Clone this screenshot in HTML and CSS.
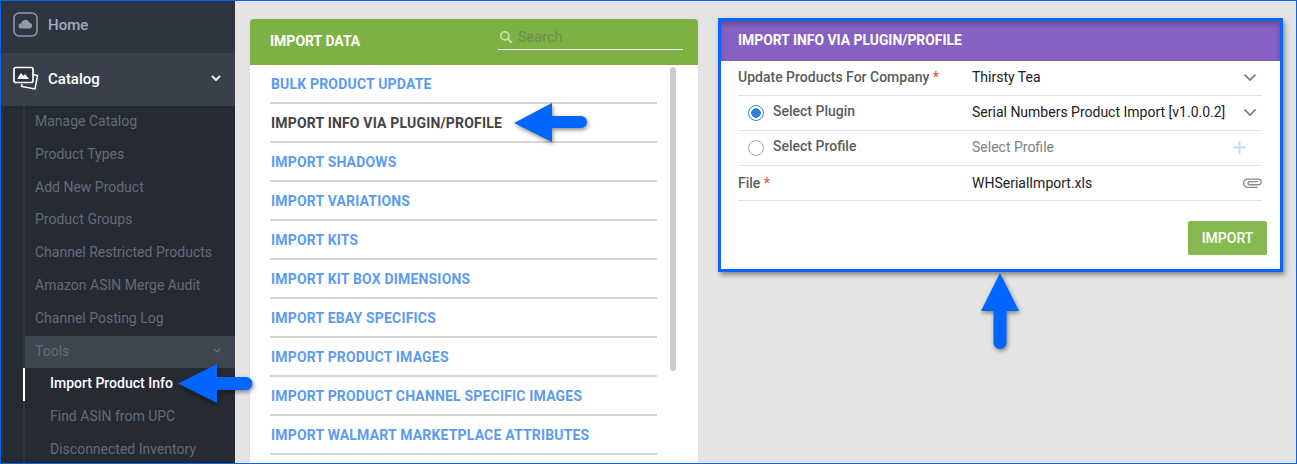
FILE: index.html
```html
<!DOCTYPE html>
<html lang="en">
<head>
<meta charset="utf-8">
<title>Import Info via Plugin/Profile</title>
<link rel="stylesheet" href="styles.css">
</head>
<body>
<div class="frame">
  <nav class="sidebar">
    <a class="nav-main">
      <svg class="nav-icon" width="26" height="26" viewBox="0 0 26 26"><rect x="1" y="1" width="23" height="23" rx="5" fill="none" stroke="#8f99ab" stroke-width="1.6"/><path d="M8 16.5a2.6 2.6 0 0 1 .2-5.2 4.4 4.4 0 0 1 8.4-.6 3 3 0 0 1 .6 5.8z" fill="#8f99ab"/></svg>
      <span>Home</span>
    </a>
    <a class="nav-main nav-open">
      <svg class="nav-icon" width="26" height="26" viewBox="0 0 26 26"><path d="M20 8.5l4.5 1-2.5 13.5-13.500-2.500.6-2.500" fill="none" stroke="#fff" stroke-width="1.500"/><rect x="1" y="1.500" width="19" height="15" rx="2" fill="#2f3540" stroke="#fff" stroke-width="1.700"/><path d="M4 13l4-6 2.500 3 1.500-2 4 5z" fill="#fff"/></svg>
      <span>Catalog</span>
      <svg class="nav-chev" width="10" height="7" viewBox="0 0 10 7"><path d="M1 1l4 4 4-4" fill="none" stroke="#fff" stroke-width="1.800"/></svg>
    </a>
    <div class="sub">
      <a class="sub-item">Manage Catalog</a>
      <a class="sub-item">Product Types</a>
      <a class="sub-item">Add New Product</a>
      <a class="sub-item">Product Groups</a>
      <a class="sub-item">Channel Restricted Products</a>
      <a class="sub-item">Amazon ASIN Merge Audit</a>
      <a class="sub-item">Channel Posting Log</a>
      <a class="sub-item sub-tools"><span>Tools</span><svg width="8" height="5" viewBox="0 0 8 5"><path d="M.7.7L4 4 7.300.7" fill="none" stroke="#6d7482" stroke-width="1.100"/></svg></a>
      <a class="sub-item sub-deep sub-active">Import Product Info</a>
      <a class="sub-item sub-deep">Find ASIN from UPC</a>
      <a class="sub-item sub-deep">Disconnected Inventory</a>
    </div>
  </nav>

  <main class="content">
    <section class="list-panel">
      <header class="list-head">
        <h2 class="list-title">IMPORT DATA</h2>
        <div class="search">
          <svg width="14" height="14" viewBox="0 0 14 14"><circle cx="5.800" cy="5.800" r="4" fill="none" stroke="#c4dca8" stroke-width="1.800"/><path d="M8.800 8.800l4 4" stroke="#c4dca8" stroke-width="2"/></svg>
          <span class="search-ph">Search</span>
        </div>
      </header>
      <div class="list-body">
        <ul class="list">
          <li class="list-item">BULK PRODUCT UPDATE</li>
          <li class="list-item list-current">IMPORT INFO VIA PLUGIN/PROFILE</li>
          <li class="list-item">IMPORT SHADOWS</li>
          <li class="list-item">IMPORT VARIATIONS</li>
          <li class="list-item">IMPORT KITS</li>
          <li class="list-item">IMPORT KIT BOX DIMENSIONS</li>
          <li class="list-item">IMPORT EBAY SPECIFICS</li>
          <li class="list-item">IMPORT PRODUCT IMAGES</li>
          <li class="list-item">IMPORT PRODUCT CHANNEL SPECIFIC IMAGES</li>
          <li class="list-item">IMPORT WALMART MARKETPLACE ATTRIBUTES</li>
        </ul>
        <div class="scrollbar"></div>
      </div>
    </section>

    <section class="form-panel">
      <header class="form-head">IMPORT INFO VIA PLUGIN/PROFILE</header>
      <div class="form-body">
        <div class="form-row form-row-first">
          <div class="form-label">Update Products For Company <span class="req">*</span></div>
          <div class="form-value">Thirsty Tea</div>
          <svg class="form-icon" width="14" height="9" viewBox="0 0 14 9"><path d="M1.500 1.500L7 7l5.500-5.500" fill="none" stroke="#757575" stroke-width="1.700"/></svg>
        </div>
        <div class="form-row form-row-mid">
          <div class="form-label form-radio"><span class="radio radio-on"></span>Select Plugin</div>
          <div class="form-value">Serial Numbers Product Import [v1.0.0.2]</div>
          <svg class="form-icon" width="14" height="9" viewBox="0 0 14 9"><path d="M1.500 1.500L7 7l5.500-5.500" fill="none" stroke="#757575" stroke-width="1.700"/></svg>
        </div>
        <div class="form-row form-row-mid">
          <div class="form-label form-radio"><span class="radio"></span>Select Profile</div>
          <div class="form-value form-ph">Select Profile</div>
          <svg class="form-icon form-plus" width="13" height="13" viewBox="0 0 13 13"><path d="M6.500 0v13M0 6.500h13" stroke="#c5d9f8" stroke-width="1.800"/></svg>
        </div>
        <div class="form-row">
          <div class="form-label">File <span class="req">*</span></div>
          <div class="form-value">WHSerialImport.xls</div>
          <svg class="form-icon form-clip" width="19" height="10" viewBox="1 6.500 22 11.500"><path transform="rotate(90 12 12)" d="M16.500 6v11.500c0 2.210-1.790 4-4 4s-4-1.790-4-4V5c0-1.380 1.120-2.500 2.500-2.500s2.500 1.120 2.500 2.500v10.500c0 .55-.45 1-1 1s-1-.45-1-1V6H10v9.500c0 1.380 1.120 2.500 2.500 2.500s2.500-1.120 2.500-2.500V5c0-2.210-1.790-4-4-4S7 2.790 7 5v12.500c0 3.040 2.460 5.500 5.500 5.500s5.500-2.460 5.500-5.500V6h-1.500z" fill="#8a8a8a"/></svg>
        </div>
        <div class="form-actions"><button class="btn-import" type="button">IMPORT</button></div>
      </div>
    </section>
  </main>

  <svg class="arrow arrow-side" width="80" height="46" viewBox="0 0 80 46"><path d="M2 22.500L41 3v13h29a6.500 6.500 0 0 1 0 13H41v13z" fill="#0066ff"/></svg>
  <svg class="arrow arrow-list" width="80" height="46" viewBox="0 0 80 46"><path d="M2 23L40 3v13h29a6 6 0 0 1 0 12H40v14z" fill="#0066ff"/></svg>
  <svg class="arrow arrow-up" width="44" height="84" viewBox="0 0 44 84"><path d="M22 2l19 38H28.500v31.500a6.500 6.500 0 0 1-13 0V40H3z" fill="#0066ff"/></svg>
</div>
</body>
</html>
```

FILE: styles.css
```css
* { box-sizing: border-box; }
html, body { margin: 0; padding: 0; }
body { width: 1297px; height: 464px; overflow: hidden; font-family: Roboto, "Liberation Sans", sans-serif; }
ul { margin: 0; padding: 0; list-style: none; }
h2 { margin: 0; }

.frame {
  position: relative;
  display: flex;
  width: 1297px;
  height: 464px;
  overflow: hidden;
  background: #e4e4e4;
  border: 1px solid #0a64e6;
}

.sidebar { flex: 0 0 234px; background: #252a33; overflow: hidden; }
.nav-main {
  display: flex;
  align-items: center;
  height: 52px;
  padding: 0 0 4px 12px;
  background: #2f3540;
  color: #a3abbb;
  font-size: 15px;
  font-weight: 500;
}
.nav-open { height: 53px; padding: 0 14px 2px 12px; background: #3a404b; color: #fff; }
.nav-icon { flex: none; margin-right: 9px; }
.nav-chev { margin-left: auto; }

.sub { margin-left: 22px; border-left: 2px solid #303641; }
.sub-item {
  display: flex;
  align-items: center;
  height: 32.800px;
  padding: 0 0 2.600px 10px;
  color: #646b78;
  font-size: 14px;
}
.sub-tools { justify-content: space-between; padding-right: 14px; background: #3f4551; }
.sub-deep { padding-left: 25px; }
.sub-active { color: #fff; font-weight: 500; box-shadow: -2px 0 0 #fff; }

.content { flex: 1; display: flex; align-items: flex-start; gap: 20px; padding: 18px 0 0 15px; }

.list-panel { width: 448px; height: 460px; background: #fff; border-radius: 4px 4px 0 0; box-shadow: 0 0 2px #d4d4d4; }
.list-head {
  display: flex;
  justify-content: space-between;
  height: 46px;
  padding: 0 15px 0 20px;
  background: #7cb244;
  border-radius: 4px 4px 0 0;
}
.list-title { align-self: center; padding-bottom: 3px; color: #fff; font-size: 14px; font-weight: 700; }
.search {
  display: flex;
  align-items: center;
  gap: 5px;
  width: 185px;
  height: 31px;
  padding: 6px 0 0 1px;
  border-bottom: 1px solid #fff;
}
.search-ph { color: #6f8a57; font-size: 14.500px; }

.list-body { display: flex; gap: 13px; padding: 0 0 0 20px; }
.list { width: 387px; flex: none; }
.list-item {
  height: 39px;
  padding-top: 11px;
  padding-left: 1px;
  border-bottom: 2px solid #d5d5d5;
  color: #5b9cf0;
  font-size: 14px;
  font-weight: 700;
  letter-spacing: .18px;
  line-height: 16px;
}
.list-current { color: #444; }
.scrollbar { flex: none; width: 6px; height: 304px; margin-top: 2px; background: #cbcbcb; border-radius: 3px; }

.form-panel {
  width: 565px;
  height: 254px;
  margin-top: -1px;
  background: #fff;
  border: 3px solid #0a64ff;
  box-shadow: 2px 3px 5px rgba(0, 0, 0, .4);
}
.form-head {
  height: 40px;
  padding: 11px 0 0 17px;
  background: #8661c1;
  box-shadow: inset 0 3px 4px rgba(0, 0, 0, .25);
  color: #fff;
  font-size: 13.900px;
  font-weight: 700;
  line-height: 16px;
}
.form-body { padding: 0 17px; }
.form-row {
  display: flex;
  align-items: center;
  height: 35px;
  margin-right: 1px;
  border-bottom: 1px solid #e3e3e3;
  font-size: 14px;
}
.form-row-first { padding-bottom: 2px; }
.form-row-mid { padding-bottom: 2px; }
.form-label { width: 234px; flex: none; color: #5c5c5c; font-weight: 500; }
.form-radio { display: flex; align-items: center; padding-left: 10px; gap: 9px; margin-top: -3px; }
.req { color: #ef5350; }
.form-value { flex: 1; color: #212121; }
.form-ph { color: #808080; }
.form-icon { flex: none; margin-right: 5px; }
.form-plus { margin-right: 16px; }
.form-clip { margin-right: 0; }
.radio {
  flex: none;
  width: 16px;
  height: 16px;
  margin-top: 5px;
  border: 1.500px solid #a8a8a8;
  border-radius: 50%;
}
.radio-on { border-color: #2f7de1; background: radial-gradient(circle, #2f7de1 0 4.500px, #fff 5px); }
.form-actions { display: flex; justify-content: flex-end; padding-top: 20px; margin-right: -4px; }
.btn-import {
  width: 79px;
  height: 34px;
  padding: 0;
  border: 0;
  border-radius: 2px;
  background: #86b950;
  color: #fff;
  font: 500 14px Roboto, sans-serif;
}

.arrow { position: absolute; filter: drop-shadow(1px 2px 2px rgba(0, 0, 0, .45)); }
.arrow-side { left: 175px; top: 360px; }
.arrow-list { left: 511px; top: 99px; }
.arrow-up { left: 977px; top: 270px; }
```
